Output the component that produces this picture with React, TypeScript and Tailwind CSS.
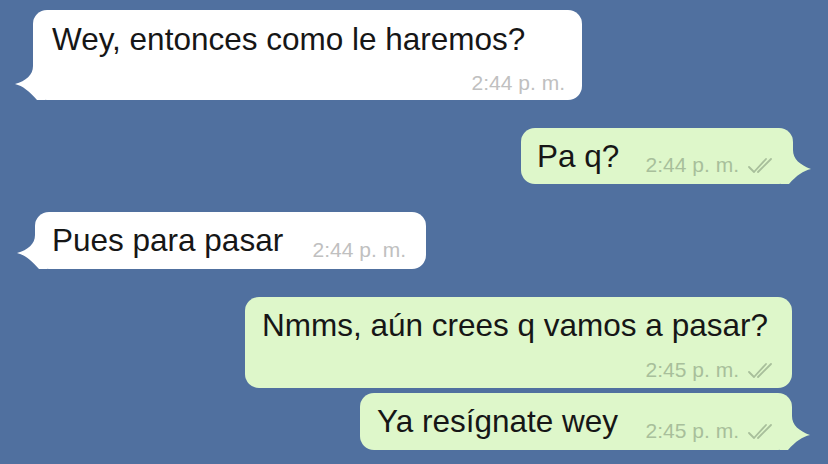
import React from "react";

const font = { fontFamily: '"Liberation Sans", Arial, sans-serif' };

function Checks() {
  return (
    <svg width="29" height="17" viewBox="0 0 29 17" className="ml-[8px]">
      <path d="M2 10 L7 15 L19 2" fill="none" stroke="#a8bf9b" strokeWidth="1.8" strokeLinecap="round" strokeLinejoin="round" />
      <path d="M11 15 L24 2" fill="none" stroke="#a8bf9b" strokeWidth="1.8" strokeLinecap="round" />
    </svg>
  );
}

function TailLeft() {
  return (
    <svg width="30" height="34" viewBox="0 0 30 34" className="absolute left-[-18px] bottom-0">
      <path d="M18 0 C18 9 11 15 0 18 C8 20 14 25 22 34 L30 34 L30 0 Z" fill="#ffffff" />
    </svg>
  );
}

function TailRight() {
  return (
    <svg width="30" height="34" viewBox="0 0 30 34" className="absolute right-[-18px] bottom-0">
      <path d="M12 0 C12 9 19 15 30 19 C22 21 16 25 8 34 L0 34 L0 0 Z" fill="#def7ca" />
    </svg>
  );
}

export default function App() {
  return (
    <div
      className="w-[828px] h-[464px] overflow-hidden bg-[#50709f] flex flex-col pt-[10px] text-[#161616]"
      style={font}
    >
      {/* Bubble 1 */}
      <div className="ml-[33px] w-[549px] h-[90px] rounded-[14px] bg-white relative flex flex-col pl-[19px] pr-[17px] pt-[11px]">
        <TailLeft />
        <div className="relative text-[31.5px] leading-[36px]">Wey, entonces como le haremos?</div>
        <div className="relative self-end mt-[14px] text-[21px] leading-[24px] text-[#c0c0c0]">2:44 p. m.</div>
      </div>

      {/* Bubble 2 */}
      <div className="mt-[28px] self-end mr-[35px] w-[272px] h-[56px] rounded-[14px] bg-[#def7ca] relative flex items-end justify-between pl-[16px] pr-[17px]">
        <TailRight />
        <div className="relative mb-[10px] text-[31.5px] leading-[36px]">Pa q?</div>
        <div className="relative mb-[7px] flex items-center text-[21px] leading-[24px] text-[#a8bf9b]">
          <span>2:44 p. m.</span>
          <Checks />
        </div>
      </div>

      {/* Bubble 3 */}
      <div className="mt-[28px] ml-[35px] w-[391px] h-[57px] rounded-[14px] bg-white relative flex items-end justify-between pl-[17px] pr-[20px]">
        <TailLeft />
        <div className="relative mb-[11px] text-[31.5px] leading-[36px]">Pues para pasar</div>
        <div className="relative mb-[7px] text-[21px] leading-[24px] text-[#c0c0c0]">2:44 p. m.</div>
      </div>

      {/* Bubble 4 */}
      <div className="mt-[28px] self-end mr-[36px] w-[547px] h-[91px] rounded-[14px] bg-[#def7ca] relative flex flex-col pl-[17px] pr-[16px] pt-[10px]">
        <div className="relative text-[31.5px] leading-[36px]">Nmms, aún crees q vamos a pasar?</div>
        <div className="relative self-end mt-[15px] flex items-center text-[21px] leading-[24px] text-[#a8bf9b]">
          <span>2:45 p. m.</span>
          <Checks />
        </div>
      </div>

      {/* Bubble 5 */}
      <div className="mt-[5px] self-end mr-[36px] w-[432px] h-[57px] rounded-[14px] bg-[#def7ca] relative flex items-end justify-between pl-[17px] pr-[16px]">
        <TailRight />
        <div className="relative mb-[11px] text-[31.5px] leading-[36px]">Ya resígnate wey</div>
        <div className="relative mb-[7px] flex items-center text-[21px] leading-[24px] text-[#a8bf9b]">
          <span>2:45 p. m.</span>
          <Checks />
        </div>
      </div>
    </div>
  );
}
